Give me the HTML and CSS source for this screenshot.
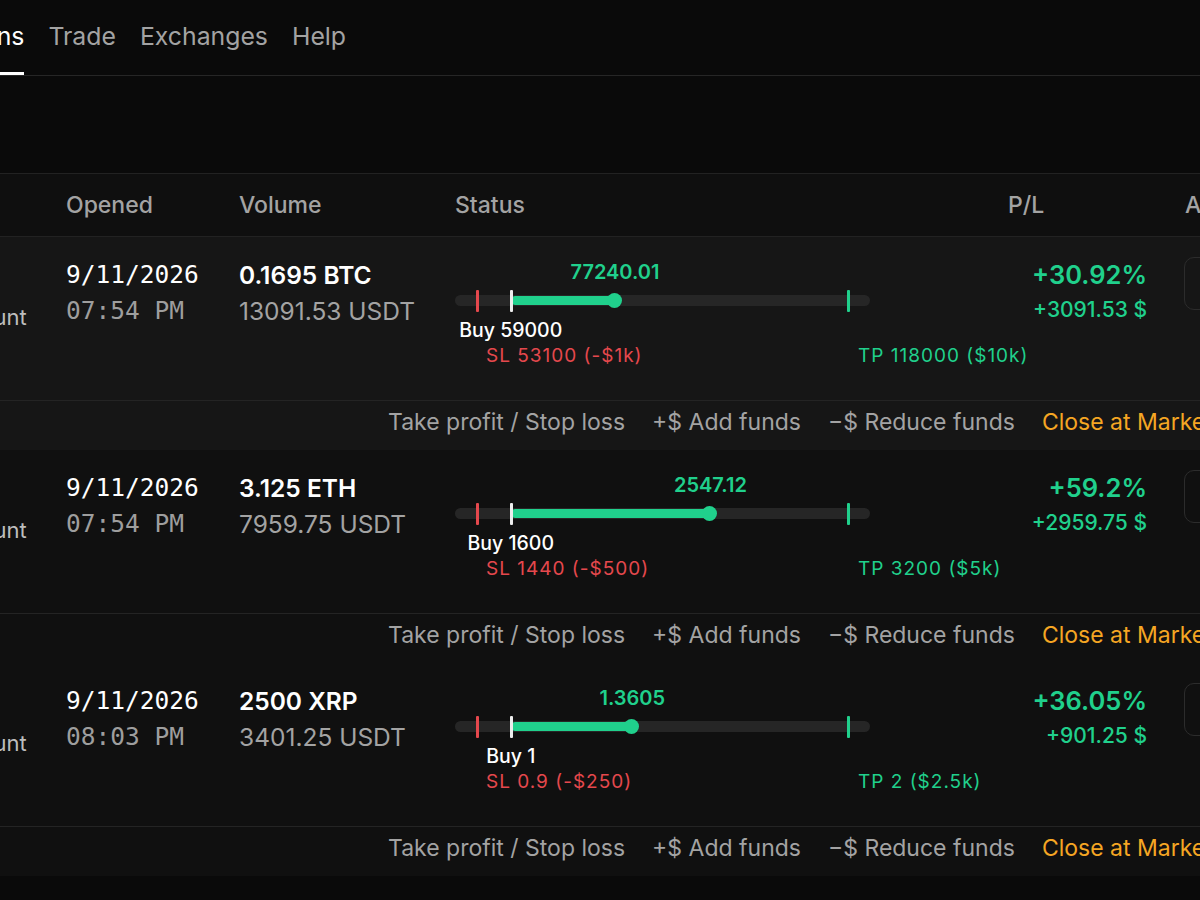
FILE: index.html
```html
<!DOCTYPE html>
<html lang="en">
<head>
  <meta charset="UTF-8" />
  <meta name="viewport" content="width=device-width, initial-scale=1.0" />
  <title>Positions</title>
  <link rel="stylesheet" href="styles.css">
</head>
<body>
  <div class="page">
    <nav class="tabs">
      <a class="tab active">Positions</a>
      <a class="tab">Trade</a>
      <a class="tab">Exchanges</a>
      <a class="tab">Help</a>
    </nav>

    <section class="positions">
      <!-- HEADER -->
      <div class="thead grid">
        <div class="col-account">Account</div>
        <div>Opened</div>
        <div>Volume</div>
        <div>Status</div>
        <div class="col-pl">P/L</div>
        <div>Actions</div>
      </div>

      <!-- BTC -->
      <div class="position selected">
        <div class="row grid">
          <div class="col-account account">Main account</div>
          <div class="opened">
            <div class="date">9/11/2026</div>
            <div class="time">07:54 PM</div>
          </div>
          <div class="volume">
            <div class="amount">0.1695 BTC</div>
            <div class="usdt">13091.53 USDT</div>
          </div>
          <div class="status">
            <div class="range">
              <div class="line price-line">
                <span class="price" style="left: 38.55%">77240.01</span>
              </div>
              <div class="track-wrap">
                <div class="track"></div>
                <div class="fill" style="left: 13.43%; width: 25.12%"></div>
                <span class="tick sl" style="left: 5.3%"></span>
                <span class="tick entry" style="left: 13.43%"></span>
                <span class="tick tp" style="left: 94.7%"></span>
              </div>
              <div class="line">
                <span class="lbl buy" style="left: 13.43%">Buy 59000</span>
              </div>
              <div class="line">
                <span class="lbl sl" style="left: 5.3%">SL 53100 (-$1k)</span>
                <span class="lbl tp" style="left: 94.7%">TP 118000 ($10k)</span>
              </div>
            </div>
          </div>
          <div class="col-pl pl">
            <div class="pct">+30.92%</div>
            <div class="usd">+3091.53 $</div>
          </div>
          <div class="actions"><button class="menu-btn">Manage</button></div>
        </div>
        <div class="row-actions">
          <a>Take profit / Stop loss</a>
          <a>+$ Add funds</a>
          <a>&minus;$ Reduce funds</a>
          <a class="close">Close at Market</a>
        </div>
      </div>

      <!-- ETH -->
      <div class="position">
        <div class="row grid">
          <div class="col-account account">Main account</div>
          <div class="opened">
            <div class="date">9/11/2026</div>
            <div class="time">07:54 PM</div>
          </div>
          <div class="volume">
            <div class="amount">3.125 ETH</div>
            <div class="usdt">7959.75 USDT</div>
          </div>
          <div class="status">
            <div class="range">
              <div class="line price-line">
                <span class="price" style="left: 61.54%">2547.12</span>
              </div>
              <div class="track-wrap">
                <div class="track"></div>
                <div class="fill" style="left: 13.43%; width: 48.11%"></div>
                <span class="tick sl" style="left: 5.3%"></span>
                <span class="tick entry" style="left: 13.43%"></span>
                <span class="tick tp" style="left: 94.7%"></span>
              </div>
              <div class="line">
                <span class="lbl buy" style="left: 13.43%">Buy 1600</span>
              </div>
              <div class="line">
                <span class="lbl sl" style="left: 5.3%">SL 1440 (-$500)</span>
                <span class="lbl tp" style="left: 94.7%">TP 3200 ($5k)</span>
              </div>
            </div>
          </div>
          <div class="col-pl pl">
            <div class="pct">+59.2%</div>
            <div class="usd">+2959.75 $</div>
          </div>
          <div class="actions"><button class="menu-btn">Manage</button></div>
        </div>
        <div class="row-actions">
          <a>Take profit / Stop loss</a>
          <a>+$ Add funds</a>
          <a>&minus;$ Reduce funds</a>
          <a class="close">Close at Market</a>
        </div>
      </div>

      <!-- XRP -->
      <div class="position">
        <div class="row grid">
          <div class="col-account account">Main account</div>
          <div class="opened">
            <div class="date">9/11/2026</div>
            <div class="time">08:03 PM</div>
          </div>
          <div class="volume">
            <div class="amount">2500 XRP</div>
            <div class="usdt">3401.25 USDT</div>
          </div>
          <div class="status">
            <div class="range">
              <div class="line price-line">
                <span class="price" style="left: 42.73%">1.3605</span>
              </div>
              <div class="track-wrap">
                <div class="track"></div>
                <div class="fill" style="left: 13.43%; width: 29.3%"></div>
                <span class="tick sl" style="left: 5.3%"></span>
                <span class="tick entry" style="left: 13.43%"></span>
                <span class="tick tp" style="left: 94.7%"></span>
              </div>
              <div class="line">
                <span class="lbl buy" style="left: 13.43%">Buy 1</span>
              </div>
              <div class="line">
                <span class="lbl sl" style="left: 5.3%">SL 0.9 (-$250)</span>
                <span class="lbl tp" style="left: 94.7%">TP 2 ($2.5k)</span>
              </div>
            </div>
          </div>
          <div class="col-pl pl">
            <div class="pct">+36.05%</div>
            <div class="usd">+901.25 $</div>
          </div>
          <div class="actions"><button class="menu-btn">Manage</button></div>
        </div>
        <div class="row-actions">
          <a>Take profit / Stop loss</a>
          <a>+$ Add funds</a>
          <a>&minus;$ Reduce funds</a>
          <a class="close">Close at Market</a>
        </div>
      </div>
    </section>
  </div>
</body>
</html>
```

FILE: styles.css
```css
* {
  margin: 0;
  padding: 0;
  box-sizing: border-box;
}

body {
  background: #0a0a0a;
  font-family: 'Inter', 'Noto Sans', sans-serif;
  color: #fff;
  overflow: hidden;
}

.page {
  width: 1560px;
  margin-left: -160px;
}

/* TABS */
.tabs {
  display: flex;
  gap: 24px;
  padding-left: 78px;
  border-bottom: 1px solid #262626;
  margin-bottom: 97px;
}

.tab {
  font-size: 24.8px;
  line-height: 30px;
  padding: 21px 0 21px;
  color: #a3a3a3;
  border-bottom: 3px solid transparent;
  cursor: pointer;
}

.tab.active {
  color: #fff;
  border-bottom-color: #fff;
}

/* TABLE */
.grid {
  display: grid;
  grid-template-columns: 226px 173px 216px 553px 177px 215px;
}

.thead {
  height: 64px;
  align-items: center;
  background: #0f0f0f;
  border-top: 1px solid #222;
  border-bottom: 1px solid #222;
  font-size: 23px;
  font-weight: 500;
  color: #a3a3a3;
}

.col-account {
  padding-left: 46px;
}

.position {
  background: #101010;
}

.position.selected {
  background: #161616;
}

.row {
  min-height: 164px;
  border-bottom: 1px solid #242424;
}

.account {
  align-self: center;
  font-size: 22px;
  color: #bdbdbd;
  margin-top: -3px;
}

.opened,
.volume,
.pl {
  padding-top: 20px;
}

.date,
.time {
  font-family: 'DejaVu Sans Mono', 'Liberation Mono', monospace;
  font-size: 24.5px;
  line-height: 36px;
}

.date {
  color: #fff;
}

.time {
  color: #9e9e9e;
}

.amount,
.usdt {
  font-size: 24.5px;
  line-height: 36px;
}

.amount {
  font-weight: 600;
}

.usdt {
  color: #a3a3a3;
}

/* STATUS RANGE */
.range {
  width: 415px;
  padding-top: 22px;
}

.line {
  position: relative;
  height: 26px;
  font-size: 19.5px;
  line-height: 26px;
}

.price-line {
  margin-bottom: 5px;
}

.price {
  position: absolute;
  top: 0;
  transform: translateX(-50%);
  color: #20d08c;
  font-size: 20px;
  font-weight: 600;
  white-space: nowrap;
}

.track-wrap {
  position: relative;
  height: 22px;
  margin-bottom: 5px;
  margin-top: 1px;
}

.track {
  position: absolute;
  left: 0;
  right: 0;
  top: 5px;
  height: 11px;
  border-radius: 6px;
  background: #262626;
}

.fill {
  position: absolute;
  top: 6px;
  height: 9px;
  border-radius: 5px;
  background: #20d08c;
}

.fill::after {
  content: '';
  position: absolute;
  right: -7px;
  top: -3px;
  width: 15px;
  height: 15px;
  border-radius: 50%;
  background: #20d08c;
}

.tick {
  position: absolute;
  top: 0;
  width: 3px;
  height: 22px;
  margin-left: -1px;
  border-radius: 1px;
}

.tick.sl {
  background: #e5484d;
}

.tick.entry {
  background: #ededed;
}

.tick.tp {
  background: #20d08c;
}

.lbl {
  position: absolute;
  top: 0;
  white-space: nowrap;
}

.lbl.buy {
  transform: translateX(-50%);
  color: #fff;
  font-weight: 500;
}

.lbl.sl,
.lbl.tp {
  font-size: 19px;
  letter-spacing: 1px;
}

.lbl.sl {
  margin-left: 9px;
  color: #e5484d;
}

.lbl.tp {
  margin-left: 10px;
  color: #20d08c;
}

/* P/L */
.pl {
  text-align: right;
  padding-right: 38px;
  color: #20d08c;
}

.pct {
  font-size: 25.5px;
  font-weight: 600;
  line-height: 36px;
}

.usd {
  font-size: 21px;
  font-weight: 500;
  line-height: 34px;
}

.actions {
  padding-top: 20px;
}

.menu-btn {
  width: 160px;
  height: 53px;
  margin-left: -1px;
  border: 1px solid #2c2c2c;
  border-radius: 10px;
  background: transparent;
  color: #d0d0d0;
  font-family: inherit;
  font-size: 20px;
  text-align: left;
  padding-left: 40px;
}

/* ACTION LINKS */
.row-actions {
  display: flex;
  align-items: flex-start;
  gap: 27px;
  height: 49px;
  padding-top: 7px;
  padding-left: 548px;
  font-size: 23px;
  line-height: 28px;
  color: #a3a3a3;
  white-space: nowrap;
}

.row-actions a {
  cursor: pointer;
}

.row-actions .close {
  color: #f5a623;
}
```
